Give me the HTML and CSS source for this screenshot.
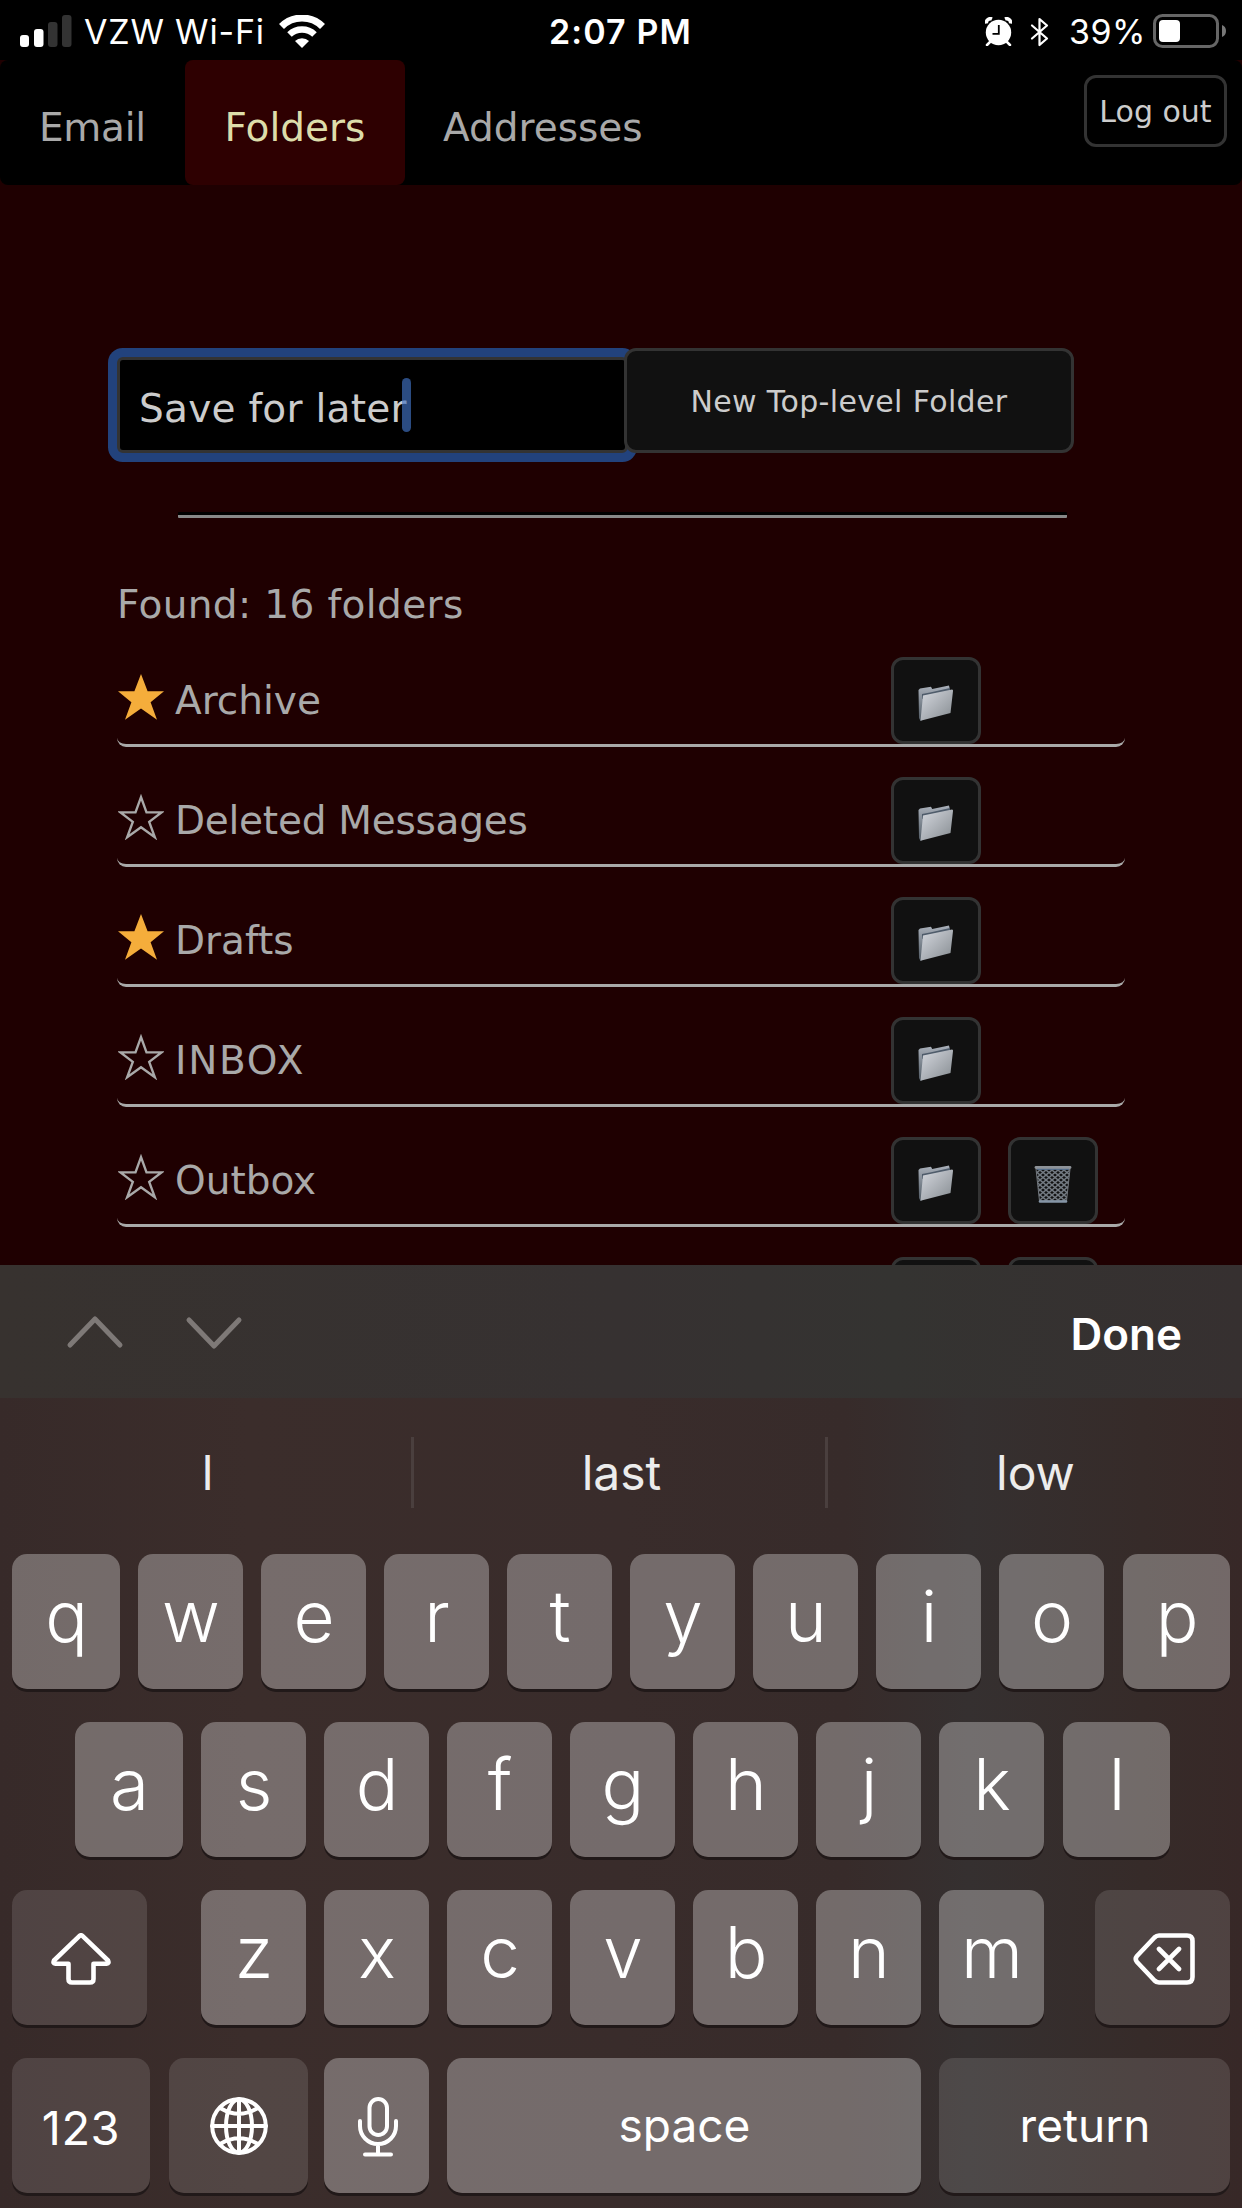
FILE: index.html
```html
<!DOCTYPE html>
<html lang="en">
<head>
<meta charset="utf-8">
<title>Folders</title>
<link rel="stylesheet" href="styles.css">
</head>
<body>
<svg class="defs" aria-hidden="true">
  <defs>
    <linearGradient id="front" x1="0" y1="0" x2="1" y2="1"><stop offset="0" stop-color="#d6d9e0"/><stop offset="1" stop-color="#858b90"/></linearGradient>
    <linearGradient id="back" x1="0" y1="0" x2="0" y2="1"><stop offset="0" stop-color="#a9b0ba"/><stop offset="1" stop-color="#4f5963"/></linearGradient>
    <pattern id="mesh" width="6" height="5" patternUnits="userSpaceOnUse"><path d="M0 0 6 5M6 0 0 5" stroke="#737a82" stroke-width="1.4"/></pattern>
    <symbol id="folder" viewBox="0 0 36 37"><path d="M.5 5 2 3.500 13 1.700 14.200 4 31 .4 32 5 30 20 2.500 36 1 33Z" fill="url(#back)"/><path d="M4 9 12 7.500 32 3 32 8 4 14Z" fill="#4f5c6b"/><path d="M5 10.500 34 4.500Q35.300 4.500 35 6L32.500 28 2.500 35.800Z" fill="url(#front)"/></symbol>
    <symbol id="trash" viewBox="0 0 38 39"><path d="M2 4H36L32.500 36H5.500Z" fill="url(#mesh)" stroke="#71767c" stroke-width="1"/><path d="M2 2.500H36" stroke="#8e9399" stroke-width="2.800" stroke-linecap="round"/><path d="M3 4.300H35" stroke="#526f91" stroke-width="1"/><path d="M6 36.500H32" stroke="#8595a6" stroke-width="2.600" stroke-linecap="round"/></symbol>
    <symbol id="star" viewBox="0 0 46 46"><path d="M23 0 29.600 17.200H46L32.600 28.200 39 45.800 23 34.400 7 45.800 13.400 28.200 0 17.200H16.400Z" fill="#f5ad3b"/></symbol>
    <symbol id="star-off" viewBox="0 0 46 46"><path d="M23 3.200 28.500 18.400H43.500L31.200 27.900 36.800 43.200 23 33.300 9.200 43.200 14.800 27.900 2.500 18.400H17.500Z" fill="none" stroke="#a9a9a9" stroke-width="2.400"/></symbol>
  </defs>
</svg>

<div class="status">
  <svg class="signal" width="52" height="32"><rect y="20" width="9" height="12" rx="3" fill="#fff"/><rect x="14" y="14" width="9.500" height="18" rx="3" fill="#fff"/><rect x="28" y="7" width="9.500" height="25" rx="3" fill="#333"/><rect x="42" width="9.500" height="32" rx="3" fill="#333"/></svg>
  <span class="carrier">VZW Wi-Fi</span>
  <svg class="wifi" width="46" height="33" viewBox="0 0 46 33"><path d="M2.500 11.500A29 29 0 0 1 43.500 11.500" fill="none" stroke="#fff" stroke-width="7"/><path d="M10.500 19.500A18 18 0 0 1 35.500 19.500" fill="none" stroke="#fff" stroke-width="6.500"/><path d="M16 26A10 10 0 0 1 30 26L23 33Z" fill="#fff"/></svg>
  <b class="time">2:07 PM</b>
  <div class="status-right">
    <svg width="27" height="29" viewBox="0 0 27 29"><circle cx="13.500" cy="15.500" r="12.700" fill="#fff"/><path d="M1.500 6.500A4 4 0 0 1 7 2M20 2A4 4 0 0 1 25.500 6.500" fill="none" stroke="#fff" stroke-width="3.500"/><path d="M5 25 2 28M22 25 25 28" stroke="#fff" stroke-width="2.500" stroke-linecap="round"/><path d="M13.800 8V16.800H7.500" fill="none" stroke="#000" stroke-width="1.800"/></svg>
    <svg class="bluetooth" width="19" height="30" viewBox="0 0 19 30"><path d="M2 8.500 17 21.500 9.500 28V2L17 8.500 2 21.500" fill="none" stroke="#fff" stroke-width="2.200" stroke-linejoin="round" stroke-linecap="round"/></svg>
    <span class="percent">39%</span>
    <svg class="battery" width="74" height="34"><rect x="1.500" y="1.500" width="63" height="31" rx="8" fill="none" stroke="#666" stroke-width="3"/><rect x="6" y="6" width="21" height="22" rx="4" fill="#fff"/><path d="M69 11Q73 12.500 73 17T69 23Z" fill="#777"/></svg>
  </div>
</div>

<nav class="tabs">
  <a class="tab email">Email</a>
  <a class="tab active">Folders</a>
  <a class="tab addresses">Addresses</a>
  <button class="logout">Log out</button>
</nav>

<main>
  <form class="create">
    <div class="field"><span class="value">Save for later</span><i class="caret"></i></div>
    <button type="button" class="new-folder">New Top-level Folder</button>
  </form>
  <div class="rule"></div>
  <p class="found">Found: 16 folders</p>
  <ul class="folders">
    <li><svg class="star"><use href="#star"/></svg><span class="name">Archive</span><button><svg class="folder"><use href="#folder"/></svg></button></li>
    <li><svg class="star"><use href="#star-off"/></svg><span class="name tight">Deleted Messages</span><button><svg class="folder"><use href="#folder"/></svg></button></li>
    <li><svg class="star"><use href="#star"/></svg><span class="name">Drafts</span><button><svg class="folder"><use href="#folder"/></svg></button></li>
    <li><svg class="star"><use href="#star-off"/></svg><span class="name caps">INBOX</span><button><svg class="folder"><use href="#folder"/></svg></button></li>
    <li><svg class="star"><use href="#star-off"/></svg><span class="name">Outbox</span><button><svg class="folder"><use href="#folder"/></svg></button><button><svg class="trash"><use href="#trash"/></svg></button></li>
    <li><span class="name"></span><button></button><button></button></li>
  </ul>
</main>

<section class="accessory">
  <svg class="arrows" width="180" height="40" fill="none" stroke="#7e7977" stroke-width="5" stroke-linecap="round" stroke-linejoin="round"><path d="M5 30 30 4 55 30M124 5 149 31 174 5"/></svg>
  <b>Done</b>
</section>
<section class="keyboard">
  <div class="suggestions"><span>l</span><span>last</span><span>low</span></div>
  <div class="keys row1"><kbd>q</kbd><kbd>w</kbd><kbd>e</kbd><kbd>r</kbd><kbd>t</kbd><kbd>y</kbd><kbd>u</kbd><kbd>i</kbd><kbd>o</kbd><kbd>p</kbd></div>
  <div class="keys row2"><kbd>a</kbd><kbd>s</kbd><kbd>d</kbd><kbd>f</kbd><kbd>g</kbd><kbd>h</kbd><kbd>j</kbd><kbd>k</kbd><kbd>l</kbd></div>
  <div class="keys row3">
    <kbd class="dark"><svg class="shift" width="60" height="52" viewBox="0 0 60 52"><path d="M28.300 3.200 3 27.500Q1.500 30.500 4.500 30.800H17.500V46Q17.500 49.500 21 49.500H39Q42.500 49.500 42.500 46V30.800H55.500Q58.500 30.500 57 27.500L31.700 3.200Q30 1.500 28.300 3.200Z"/></svg></kbd>
    <kbd>z</kbd><kbd>x</kbd><kbd>c</kbd><kbd>v</kbd><kbd>b</kbd><kbd>n</kbd><kbd>m</kbd>
    <kbd class="dark"><svg class="erase" width="62" height="52" viewBox="0 0 62 52"><path d="M26 2.500H54Q59.500 2.500 59.500 8V44Q59.500 49.500 54 49.500H26Q23.500 49.500 21.500 47.500L4 29Q1.500 26 4 23L21.500 4.500Q23.500 2.500 26 2.500ZM26 16 46 36M46 16 26 36"/></svg></kbd>
  </div>
  <div class="keys row4">
    <kbd class="dark digits">123</kbd>
    <kbd class="dark globe"><svg width="58" height="58" viewBox="0 0 58 58"><circle cx="29" cy="29" r="26.800"/><ellipse cx="29" cy="29" rx="13" ry="26.800"/><path d="M29 2V56M2 29H56M11 11.500Q29 22 47 11.500M11 46.500Q29 36 47 46.500"/></svg></kbd>
    <kbd class="mic"><svg width="40" height="60" viewBox="0 0 40 60"><rect x="11.500" y="2" width="17.500" height="36" rx="8.750"/><path d="M2 24V29A18 18 0 0 0 38 29V24M20 47V57M7 57.500H33"/></svg></kbd>
    <kbd class="space">space</kbd>
    <kbd class="dark return">return</kbd>
  </div>
</section>
</body>
</html>
```
FILE: styles.css
```css
* { box-sizing: border-box; }
body {
  margin: 0; width: 1242px; height: 2208px; overflow: hidden;
  display: flex; flex-direction: column;
  background: #1f0001; color: #a9a9a9;
  font: 39px/1 "DejaVu Sans", Verdana, sans-serif;
}
svg { display: block; flex: none; }
.defs { position: absolute; width: 0; height: 0; }
button { margin: 0; padding: 2px 0 0; border: 3px solid #333; border-radius: 12px; background: #111; color: #ccc; font: 30px/1 "DejaVu Sans", Verdana, sans-serif; }

.status { height: 60px; flex: none; display: grid; grid-template-columns: 52px 195px 46px 1fr auto; align-items: center; padding-left: 20px; background: #000; color: #fff; font: 34px/60px Inter, sans-serif; }
.carrier { padding: 2px 0 0 12px; white-space: nowrap; letter-spacing: .8px; }
.signal { width: 52px; }
.wifi { margin-left: 12px; }
.time { margin-left: 236px; padding-top: 2px; font-weight: 600; white-space: nowrap; letter-spacing: 1.1px; }
.status-right { display: flex; align-items: center; margin-right: 15px; }
.bluetooth { margin-left: 18px; margin-top: 2px; }
.percent { width: 84px; margin-left: 20px; padding-top: 2px; letter-spacing: .5px; }

.tabs { height: 125px; flex: none; display: flex; background: #000; border-radius: 8px; }
.tab { display: flex; align-items: center; padding-top: 9px; border-radius: 8px; }
.email { width: 185px; padding-left: 39px; letter-spacing: -.3px; }
.active { width: 220px; justify-content: center; background: #2e0001; color: #dda; }
.addresses { padding-left: 38px; }
.logout { width: 143px; height: 72px; margin: 15px 15px 0 auto; background: #000; }

main { height: 1080px; flex: none; overflow: hidden; padding: 163px 117px 0; }
.create { display: flex; align-items: flex-start; }
.field { width: 511px; height: 96px; margin: 9px -4px 0 0; padding-left: 19px; display: flex; align-items: center; border: 3px solid #333; border-radius: 6px; background: #000; color: #ccc; box-shadow: 0 0 0 9px #22427c; }
.value { padding-top: 6px; letter-spacing: .25px; }
.caret { width: 9px; height: 54px; margin-left: -5px; border-radius: 5px; background: #4274c6a8; }
.new-folder { position: relative; width: 450px; height: 105px; letter-spacing: .35px; }
.rule { height: 6px; margin: 59px 58px 0 61px; background: #888; border-top: 3px solid #000; border-radius: 1px; }
.found { margin: 65px 0 0; height: 44px; line-height: 43px; letter-spacing: .38px; }
.folders { list-style: none; margin: 0; padding: 0; }
.folders li { height: 120px; display: flex; align-items: flex-end; border-bottom: 3px solid #a9a9a9; border-radius: 9px; padding-right: 27px; }
.star { width: 46px; height: 46px; margin: 0 0 24px 1px; }
.name { flex: 1; height: 63px; padding-left: 11px; line-height: 39px; }
.tight { letter-spacing: -.25px; }
.caps { letter-spacing: 1.7px; }
.folders button { width: 90px; height: 87px; margin-right: 27px; display: flex; justify-content: center; padding-top: 25px; }
.folders button:only-of-type { margin-right: 117px; }
.folders button + button { margin-right: 0; }
.folder { width: 36px; height: 37px; }
.trash { width: 38px; height: 39px; }

.accessory { height: 133px; flex: none; display: flex; justify-content: space-between; align-items: center; padding: 4px 60px 0 65px; background: linear-gradient(90deg, #37322f, #363131 50%, #343331 72%, #363030); color: #fff; font: 44px/1 Inter, sans-serif; }
.accessory .arrows { margin-top: 2px; }
.accessory b { font-weight: 600; }

.keyboard { height: 810px; flex: none; background: linear-gradient(90deg, #372a29, #3b2d2b 20%, #392c2b 50%, #372b2a 68%, #353030 78%, #362b29 92%, #372827); color: #fff; font-family: Inter, sans-serif; }
.suggestions { height: 156px; padding-top: 39px; display: grid; grid-template-columns: 414px 414px 414px; }
.suggestions span { height: 71px; padding-left: 4px; border-right: 3px solid #4a3f3e; text-align: center; font-size: 48px; line-height: 71px; color: #ececec; }
.suggestions span:last-child { border: 0; padding-left: 1px; }
.keys { height: 168px; display: flex; gap: 18px; padding: 0 12px; }
kbd { width: 105px; height: 135px; flex: none; display: flex; justify-content: center; align-items: center; padding: 0 0 10px 1px; border-radius: 15px; background: rgba(255,255,255,.3); box-shadow: 0 3px 0 #211919; font: 350 71px/1 Inter, sans-serif; }
.row1 kbd:first-child, .row2 kbd:first-child { width: 108px; }
.row1 kbd:last-child, .row2 kbd:last-child { width: 107px; margin-left: 1px; }
.row2 { padding: 0 75px; }
.keys .dark { background: rgba(255,255,255,.12); }
.row3 .dark { width: 135px; padding: 2px 0 0 3px; }
.row3 .dark:first-child { margin-right: 36px; }
.row3 .dark:last-child { margin-left: 33px; }
kbd svg { fill: none; stroke: #fff; stroke-width: 4.6; stroke-linecap: round; stroke-linejoin: round; }
.row4 .digits { width: 138px; padding: 3px 0 0; font-size: 47px; font-weight: 400; letter-spacing: .5px; }
.row4 .globe { width: 139px; padding: 0; margin: 0 -2px 0 1px; }
.globe svg { stroke-width: 4; }
.row4 .mic { padding: 2px 0 0 2px; }
.mic svg { stroke-width: 4; }
.row4 .space, .row4 .return { padding: 0 0 2px 1px; font-size: 46px; font-weight: 400; }
.row4 .space { width: 474px; }
.row4 .return { width: 291px; }
```
